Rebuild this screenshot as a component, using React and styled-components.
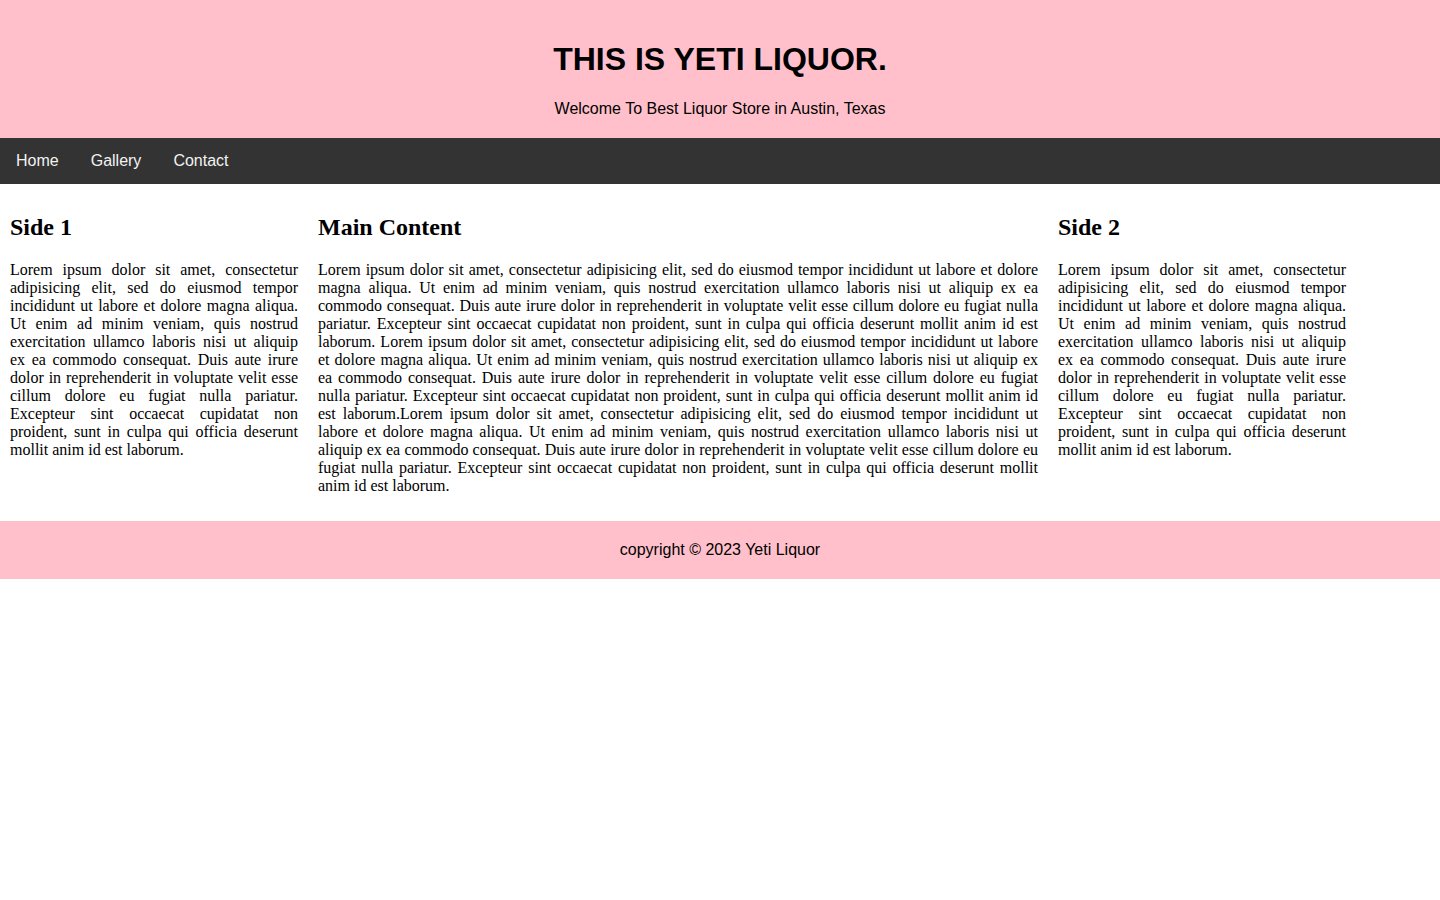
import React from "react";
import styled, { createGlobalStyle } from "styled-components";

const LOREM =
  "Lorem ipsum dolor sit amet, consectetur adipisicing elit, sed do eiusmod tempor incididunt ut labore et dolore magna aliqua. Ut enim ad minim veniam, quis nostrud exercitation ullamco laboris nisi ut aliquip ex ea commodo consequat. Duis aute irure dolor in reprehenderit in voluptate velit esse cillum dolore eu fugiat nulla pariatur. Excepteur sint occaecat cupidatat non proident, sunt in culpa qui officia deserunt mollit anim id est laborum.";

const App = () => {
  return (
    <>
      <GlobalStyle />
      <Header>
        <Title>THIS IS YETI LIQUOR.</Title>
        <Tagline>Welcome To Best Liquor Store in Austin, Texas</Tagline>
      </Header>

      <Nav>
        <NavLink href="#">Home</NavLink>
        <NavLink href="#">Gallery</NavLink>
        <NavLink href="#">Contact</NavLink>
      </Nav>

      <Row>
        <Column $width="20%">
          <Heading>Side 1</Heading>
          <Text>{LOREM}</Text>
        </Column>
        <Column $width="50%">
          <Heading>Main Content</Heading>
          <Text>
            {LOREM} {LOREM}
            {LOREM}
          </Text>
        </Column>
        <Column $width="20%">
          <Heading>Side 2</Heading>
          <Text>{LOREM}</Text>
        </Column>
      </Row>

      <Footer>copyright © 2023 Yeti Liquor</Footer>
    </>
  );
};

export default App;

const GlobalStyle = createGlobalStyle`
  body {
    margin: 0;
    font-family: "Liberation Serif", "Times New Roman", serif;
    color: #000;
    background: #fff;
  }
`;

const Header = styled.header`
  background-color: pink;
  padding: 20px;
  text-align: center;
  font-family: "Liberation Sans", Arial, sans-serif;
`;

const Title = styled.h1`
  font-size: 32px;
  line-height: 36.8px;
  margin: 21.44px 0;
`;

const Tagline = styled.p`
  font-size: 16px;
  line-height: 18.4px;
  margin: 0;
`;

const Nav = styled.nav`
  display: flex;
  background-color: #333;
  font-family: "Liberation Sans", Arial, sans-serif;
`;

const NavLink = styled.a`
  display: block;
  color: #f2f2f2;
  text-decoration: none;
  padding: 14px 16px;
  font-size: 16px;
  line-height: 18px;
`;

const Row = styled.div`
  display: flex;
  align-items: flex-start;
`;

const Column = styled.div`
  flex: none;
  box-sizing: content-box;
  width: ${p => p.$width};
  padding: 10px;
`;

const Heading = styled.h2`
  font-size: 24px;
  line-height: 27px;
  margin: 19.92px 0;
`;

const Text = styled.p`
  font-size: 16px;
  line-height: 18px;
  text-align: justify;
  margin: 16px 0;
`;

const Footer = styled.footer`
  background-color: pink;
  padding: 20px;
  text-align: center;
  font-family: "Liberation Sans", Arial, sans-serif;
  font-size: 16px;
  line-height: 18px;
`;
